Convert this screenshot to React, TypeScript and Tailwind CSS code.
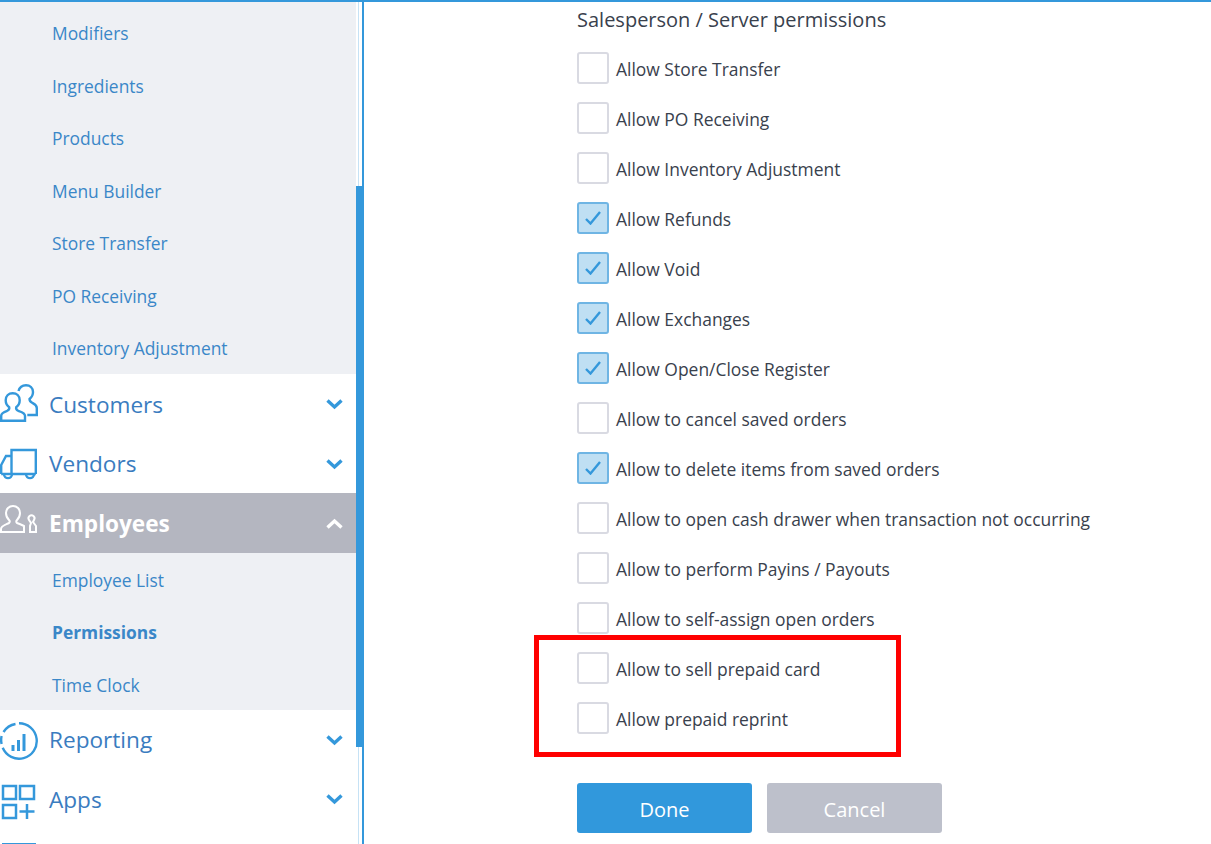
import type { ReactNode } from "react";

const permissions = [
  { label: "Allow Store Transfer", checked: false },
  { label: "Allow PO Receiving", checked: false },
  { label: "Allow Inventory Adjustment", checked: false },
  { label: "Allow Refunds", checked: true },
  { label: "Allow Void", checked: true },
  { label: "Allow Exchanges", checked: true },
  { label: "Allow Open/Close Register", checked: true },
  { label: "Allow to cancel saved orders", checked: false },
  { label: "Allow to delete items from saved orders", checked: true },
  { label: "Allow to open cash drawer when transaction not occurring", checked: false },
  { label: "Allow to perform Payins / Payouts", checked: false },
  { label: "Allow to self-assign open orders", checked: false },
  { label: "Allow to sell prepaid card", checked: false },
  { label: "Allow prepaid reprint", checked: false },
];

const CustomersIcon = () => (
  <svg width="38" height="40" viewBox="0 0 38 40" fill="none" stroke="#3498db" strokeWidth="2.4">
    <path d="M1.2 36.8v-5c0-3 3-4 6-5 2-1 2.400-2 2-3.500-2-1.500-3.500-4-3.500-7 0-4.500 3-7 7-7s7 2.500 7 7c0 3-1.500 5.500-3.500 7-.4 1.500 0 2.500 2 3.500 3 1 6.800 2 6.800 5v5z" />
    <path d="M18.500 7c1-3.500 3.500-5.800 7.500-5.800 4 0 7 2.800 7 6.800 0 3-1.500 5.500-3.500 7 0 2 1 3 3 4 2 1 4.300 2 4.300 5v7h-9.500" />
  </svg>
);

const VendorsIcon = () => (
  <svg width="38" height="32" viewBox="0 0 38 32" fill="none" stroke="#3498db" strokeWidth="2.4" className="mt-[2px]">
    <path d="M11.500 26V2h24.300v24" />
    <path d="M11.500 8H6L1.200 17v9" />
    <path d="M1.200 26h34.600" />
    <path d="M4 26c0 5.500 8 5.500 8 0M26 26c0 5.500 8 5.500 8 0" />
  </svg>
);

const EmployeesIcon = () => (
  <svg width="38" height="30" viewBox="0 0 38 30" fill="none" stroke="#fff" strokeWidth="2" className="-mt-[5px]">
    <path d="M1 27v-3c0-3 4-4 8-6 1-1 1-2 0-3-2-2-3-4-3-7 0-4 3-7 7-7s7 3 7 7c0 3-1 5-3 7-1 1-1 2 0 3 3 1 5 2 7 3v6z" />
    <path d="M29 15a3 3 0 1 1 5 0l-1 2 3 4v6h-6v-6l1-3z" />
  </svg>
);

const ReportingIcon = () => (
  <svg width="38" height="38" viewBox="0 0 38 38" fill="none" stroke="#3498db" strokeWidth="2.4" className="mt-[3px]">
    <path d="M3.500 10a18 18 0 0 1 12-8M19 1.300a17.700 17.700 0 1 1-16.300 24.500M1.600 22a18 18 0 0 1 0-8" />
    <path d="M13 23v6M18.500 18v11M24 12v17" strokeWidth="3" />
  </svg>
);

const AppsIcon = () => (
  <svg width="36" height="36" viewBox="0 0 36 36" fill="none" stroke="#3498db" strokeWidth="2.5" className="mt-[6px]">
    <rect x="3" y="2" width="13" height="13" />
    <rect x="20" y="2" width="14" height="13" />
    <rect x="3" y="21" width="13" height="13" />
    <path d="M27 20v15M19.500 27.500h15" />
  </svg>
);

const Chevron = ({ up }: { up?: boolean }) => (
  <svg width="17" height="11" viewBox="0 0 17 11" fill="none" stroke={up ? "#fff" : "#3498db"} strokeWidth="3.4" className="mr-[13px] mt-[2px] shrink-0">
    <path d={up ? "M1.500 9.500L8.500 3l7 6.500" : "M1.500 1.500L8.500 8l7-6.500"} />
  </svg>
);

const SubItem = ({ label, bold }: { label: string; bold?: boolean }) => (
  <div className={`h-[52.5px] pl-[52px] flex items-center text-[17.4px] text-[#3a87c8] ${bold ? "font-bold" : ""}`}>{label}</div>
);

const NavRow = ({ icon, label, open }: { icon: ReactNode; label: string; open?: boolean }) => (
  <div className={`h-[59.5px] flex items-center shrink-0 ${open ? "bg-[#b4b6c0] text-white font-bold" : "bg-white text-[#3a7cbf]"}`}>
    <div className="w-[49px] shrink-0 flex items-center">{icon}</div>
    <span className="flex-1 text-[22.6px] pt-[2px]">{label}</span>
    <Chevron up={open} />
  </div>
);

const Sidebar = () => (
  <div className="w-[364px] shrink-0 flex h-full overflow-hidden">
    <div className="w-[356px] shrink-0 flex flex-col">
      <div className="bg-[#eef0f4] pt-[5.25px] shrink-0 h-[372px] overflow-hidden">
        {["Modifiers", "Ingredients", "Products", "Menu Builder", "Store Transfer", "PO Receiving", "Inventory Adjustment"].map((item) => (
          <SubItem key={item} label={item} />
        ))}
      </div>
      <NavRow icon={<CustomersIcon />} label="Customers" />
      <NavRow icon={<VendorsIcon />} label="Vendors" />
      <NavRow icon={<EmployeesIcon />} label="Employees" open />
      <div className="bg-[#eef0f4] shrink-0 h-[157px] pt-[1px]">
        <SubItem label="Employee List" />
        <SubItem label="Permissions" bold />
        <SubItem label="Time Clock" />
      </div>
      <NavRow icon={<ReportingIcon />} label="Reporting" />
      <NavRow icon={<AppsIcon />} label="Apps" />
      <div className="mt-[14px] ml-[2px] w-[34px] h-[2px] shrink-0 bg-[#3498db]" />
    </div>
    <div className="w-[8px] relative border-r-2 border-[#3498db] bg-white">
      <div className="absolute left-[2px] top-0 bottom-0 w-px bg-[#c6e2f5]" />
      <div className="absolute left-0 top-[184px] w-[6px] h-[561px] bg-[#3498db]" />
    </div>
  </div>
);

const PermissionRow = ({ label, checked }: { label: string; checked: boolean }) => (
  <div className="h-[50px] flex items-center gap-[7px]">
    <div className={`w-[32px] h-[32px] rounded-[3px] border-2 flex items-center justify-center ${checked ? "bg-[#bfdff3] border-[#6fb5e4]" : "bg-white border-[#d9dae2]"}`}>
      {checked && (
        <svg width="16" height="14" viewBox="0 0 16 14" fill="none" stroke="#3498db" strokeWidth="2.4">
          <path d="M1 8l4.500 4.500L15 1" />
        </svg>
      )}
    </div>
    <span className="text-[17.45px] text-[#39414d] whitespace-nowrap pt-[2px]">{label}</span>
  </div>
);

export default function App() {
  return (
    <div className="w-[1211px] h-[844px] overflow-hidden bg-white border-t-2 border-[#3498db] flex relative" style={{ fontFamily: '"Open Sans", sans-serif' }}>
      <Sidebar />
      <main className="flex-1 pl-[213px]">
        <h2 className="text-[20px] leading-[28px] mt-[4px] text-[#39414d] font-normal">Salesperson / Server permissions</h2>
        <div className="mt-[9px] flex flex-col">
          {permissions.map((p) => <PermissionRow key={p.label} label={p.label} checked={p.checked} />)}
        </div>
        <div className="mt-[40px] flex gap-[15px]">
          <button className="w-[175px] h-[50px] rounded-[3px] bg-[#3198dc] text-white text-[20px] pt-[4px]">Done</button>
          <button className="w-[175px] h-[50px] rounded-[3px] bg-[#bdc0cb] text-white text-[20px] pt-[4px]">Cancel</button>
        </div>
      </main>
      <div className="absolute left-[534px] top-[633px] w-[367px] h-[122px] border-[5px] border-[#ff0000]" />
    </div>
  );
}
